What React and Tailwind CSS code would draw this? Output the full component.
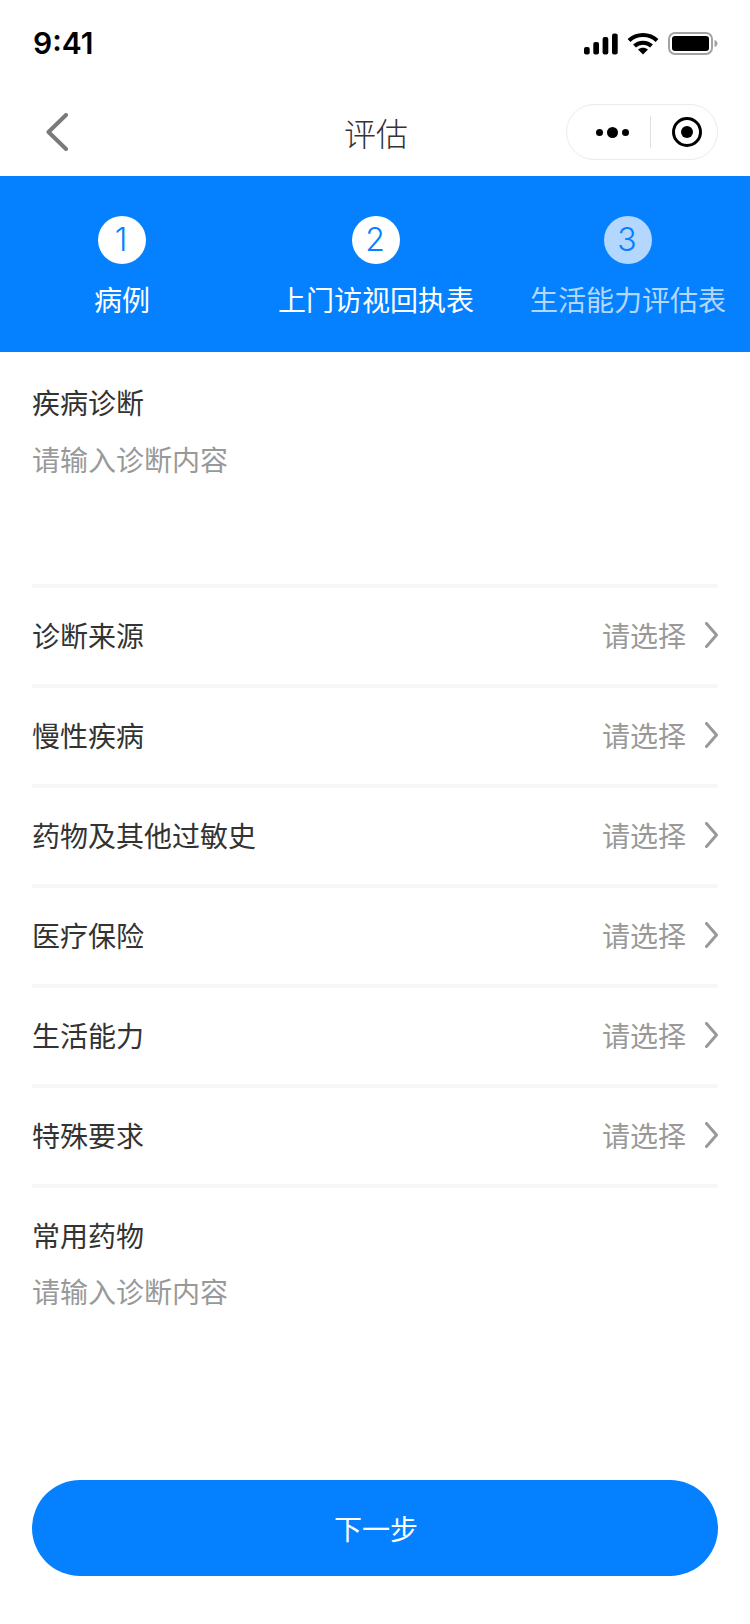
import React from 'react';

const cjk = 'font-["Noto_Sans_CJK_SC","Noto_Sans",sans-serif]';

const steps = [
  { num: 1, label: '病例', active: true },
  { num: 2, label: '上门访视回执表', active: true },
  { num: 3, label: '生活能力评估表', active: false },
];

const rows = ['诊断来源', '慢性疾病', '药物及其他过敏史', '医疗保险', '生活能力', '特殊要求'];

const StatusIcons = () => (
  <div className="flex items-center">
    <svg width="34" height="22" viewBox="0 0 34 22" fill="#000">
      <rect x="0" y="14" width="5.7" height="7.5" rx="2" />
      <rect x="9.3" y="9" width="5.7" height="12.5" rx="2" />
      <rect x="18.6" y="4" width="5.7" height="17.5" rx="2" />
      <rect x="28" y="0.5" width="5.7" height="21" rx="2" />
    </svg>
    <svg className="ml-[9px]" width="32" height="23" viewBox="0 0 32 23" fill="none" stroke="#000" strokeWidth="4">
      <path d="M2 8.5C9.5 1 22.5 1 30 8.5" />
      <path d="M7.5 14C12 9.5 20 9.5 24.5 14" />
      <path d="M11 17.5L16 22.5L21 17.5C18 15 14 15 11 17.5Z" fill="#000" stroke="none" />
    </svg>
    <svg className="ml-[9px]" width="50" height="23" viewBox="0 0 50 23" fill="none">
      <rect x="1" y="1" width="43" height="21" rx="6" stroke="#a3a3a3" strokeWidth="2" />
      <rect x="4" y="4" width="37" height="15" rx="3" fill="#000" />
      <path d="M46.5 8C48.5 8.5 49.5 10 49.5 11.5C49.5 13 48.5 14.5 46.5 15Z" fill="#a3a3a3" />
    </svg>
  </div>
);

const NavBar = () => (
  <div className="relative h-[88px] flex items-center justify-between pl-[46px] pr-8">
    <svg width="22" height="38" viewBox="0 0 22 38" fill="none" stroke="#7a7a7a" strokeWidth="4" strokeLinecap="round" strokeLinejoin="round">
      <path d="M20 2L2.5 19L20 36" />
    </svg>
    <h1 className="absolute left-0 right-0 pl-[2px] text-center text-[32px] leading-[44px] font-light text-[#333]">评估</h1>
    <div className="w-[152px] h-14 rounded-full border border-[#ebebeb] flex items-center">
      <div className="w-[83px] flex justify-center items-center gap-[4px] pl-[8px]">
        <span className="w-[7px] h-[7px] rounded-full bg-black" />
        <span className="w-[11px] h-[11px] rounded-full bg-black" />
        <span className="w-[7px] h-[7px] rounded-full bg-black" />
      </div>
      <div className="w-px h-8 bg-[#e0e0e0]" />
      <div className="flex-1 flex justify-center pl-[6px]">
        <div className="w-[30px] h-[30px] rounded-full border-[3px] border-black flex items-center justify-center">
          <span className="w-[12px] h-[12px] rounded-full bg-black" />
        </div>
      </div>
    </div>
  </div>
);

const Steps = () => (
  <div className="h-[176px] bg-[#0581ff] grid grid-cols-[244px_264px_240px] pt-10">
    {steps.map((s) => (
      <div key={s.num} className="flex flex-col items-center">
        <div className={`w-12 h-12 rounded-full flex items-center justify-center pr-[2px] text-[#0581ff] text-[32px] font-light font-["Inter",sans-serif] ${s.active ? 'bg-white' : 'bg-[#b3d7ff]'}`}>
          {s.num}
        </div>
        <div className={`mt-[15px] text-[28px] leading-[40px] whitespace-nowrap ${s.active ? 'text-white' : 'text-[#b3d7ff]'}`}>
          {s.label}
        </div>
      </div>
    ))}
  </div>
);

const TextBlock = ({ label, top, gap, height }) => (
  <div className={`px-8 ${top} ${height}`}>
    <div className="text-[28px] leading-[40px] text-[#333]">{label}</div>
    <div className={`${gap} text-[28px] leading-[40px] text-[#999]`}>请输入诊断内容</div>
  </div>
);

const SelectRow = ({ label }) => (
  <div className="h-[96px] flex items-center justify-between pb-[2px]">
    <span className="text-[28px] leading-[40px] text-[#333]">{label}</span>
    <div className="flex items-center gap-[19px]">
      <span className="text-[28px] leading-[40px] text-[#999]">请选择</span>
      <svg width="13" height="26" viewBox="0 0 13 26" fill="none" stroke="#999" strokeWidth="3" strokeLinecap="round" strokeLinejoin="round">
        <path d="M1.5 1.5L11.5 13L1.5 24.5" />
      </svg>
    </div>
  </div>
);

export default function App() {
  return (
    <div className={`w-[750px] h-[1624px] bg-white flex flex-col ${cjk}`}>
      {/* status bar */}
      <div className="h-[88px] flex items-start justify-between pl-[33px] pr-8 pt-[32px]">
        <span className="text-[30px] leading-[22px] font-semibold text-black font-['Inter',sans-serif]">9:41</span>
        <StatusIcons />
      </div>
      <NavBar />
      <Steps />

      <TextBlock label="疾病诊断" top="pt-[30px]" gap="mt-[17px]" height="h-[232px]" />
      <div className="mx-8 border-t-4 border-[#f7f7f7]">
        {rows.map((r) => (
          <div key={r} className="border-b-4 border-[#f7f7f7]">
            <SelectRow label={r} />
          </div>
        ))}
      </div>
      <TextBlock label="常用药物" top="pt-[27px]" gap="mt-[16px]" height="h-[292px]" />

      <div className="px-8">
        <button className="w-full h-24 rounded-full bg-[#0581ff] pl-[2px] text-white text-[28px] leading-[40px]">下一步</button>
      </div>
    </div>
  );
}
